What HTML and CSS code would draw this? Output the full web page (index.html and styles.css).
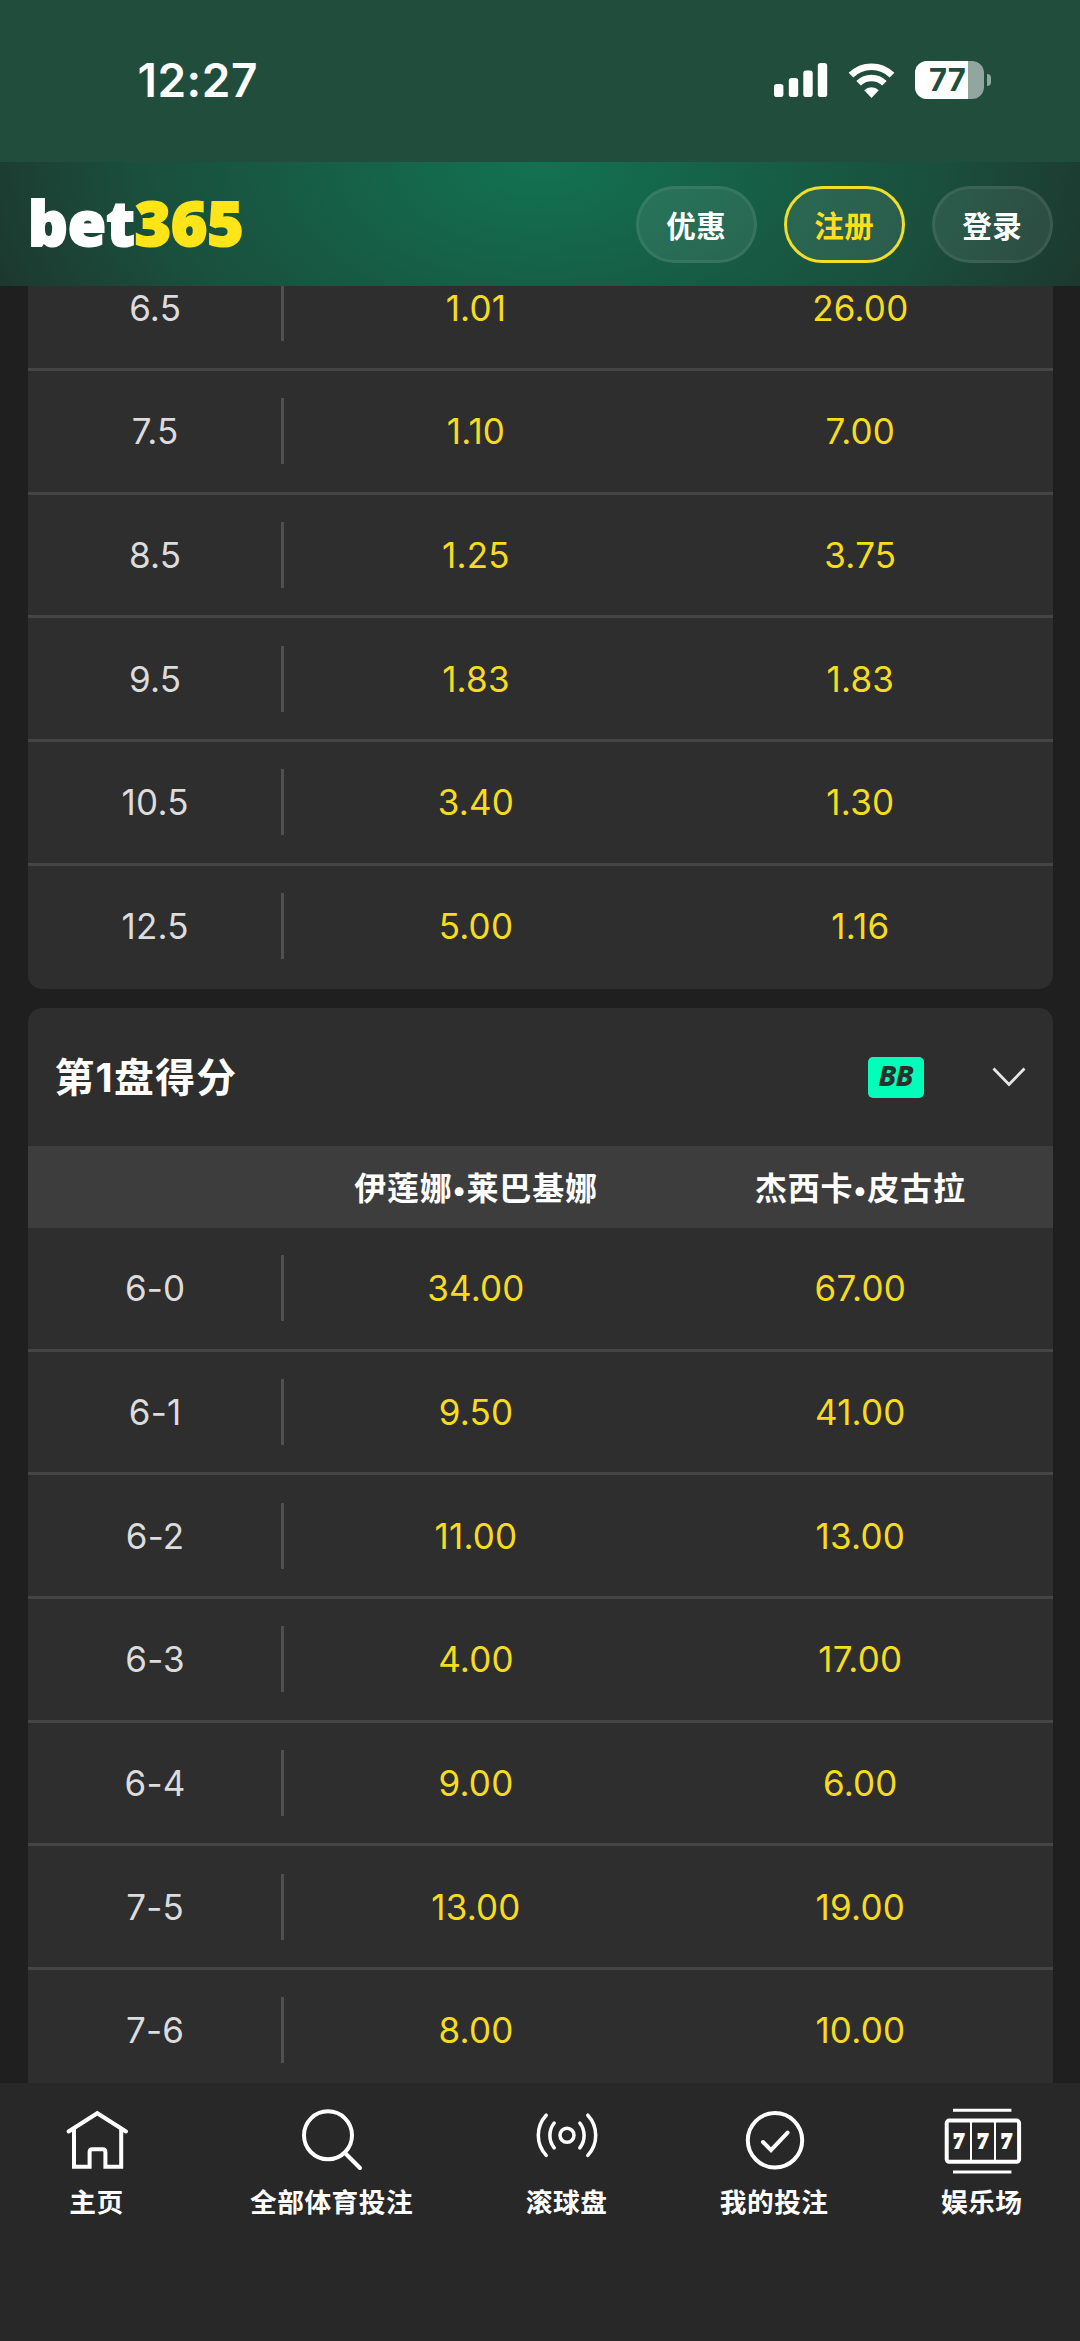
FILE: index.html
```html
<!DOCTYPE html>
<html lang="zh-CN">
<head>
<meta charset="utf-8">
<title>bet365</title>
<link rel="stylesheet" href="styles.css">
</head>
<body>
<div class="screen">
  <div class="status">
    <span class="clock">12:27</span>
    <div class="status-icons">
      <svg class="signal" width="54" height="34" viewBox="0 0 54 34" fill="#fff">
        <rect x="0" y="21" width="9.4" height="13" rx="2.8"/>
        <rect x="14.8" y="15" width="9.4" height="19" rx="2.8"/>
        <rect x="29.3" y="7.5" width="9.4" height="26.5" rx="2.8"/>
        <rect x="43.8" y="0" width="9.4" height="34" rx="2.8"/>
      </svg>
      <svg class="wifi" width="47" height="35" viewBox="0 0 47 35">
        <path d="M3 12.2A29 29 0 0 1 44 12.2" fill="none" stroke="#fff" stroke-width="6.6"/>
        <path d="M10.6 20.2A18.5 18.5 0 0 1 36.4 20.2" fill="none" stroke="#fff" stroke-width="6.4"/>
        <path d="M23.5 35L16.2 27.2A10.3 10.3 0 0 1 30.8 27.2Z" fill="#fff"/>
      </svg>
      <div class="battery"><span class="battery-level">77</span></div>
      <span class="battery-tip"></span>
    </div>
  </div>

  <header class="topbar">
    <div class="logo">bet<span class="logo-num">365</span></div>
    <div class="actions">
      <a class="pill">优惠</a>
      <a class="pill pill-join">注册</a>
      <a class="pill">登录</a>
    </div>
  </header>

  <main class="content">
    <section class="card card-top">
      <div class="row"><span class="line">6.5</span><span class="odds">1.01</span><span class="odds">26.00</span></div>
      <div class="row"><span class="line">7.5</span><span class="odds">1.10</span><span class="odds">7.00</span></div>
      <div class="row"><span class="line">8.5</span><span class="odds">1.25</span><span class="odds">3.75</span></div>
      <div class="row"><span class="line">9.5</span><span class="odds">1.83</span><span class="odds">1.83</span></div>
      <div class="row"><span class="line">10.5</span><span class="odds">3.40</span><span class="odds">1.30</span></div>
      <div class="row"><span class="line">12.5</span><span class="odds">5.00</span><span class="odds">1.16</span></div>
    </section>

    <section class="card card-bottom">
      <div class="card-head">
        <h2 class="card-title">第1盘得分</h2>
        <span class="badge">BB</span>
        <svg class="chevron" width="34" height="20" viewBox="0 0 34 20"><path d="M1.5 1.5L17 17.5L32.5 1.5" fill="none" stroke="#e6e6e6" stroke-width="2.8"/></svg>
      </div>
      <div class="players">
        <span class="player">伊莲娜<i class="dot">•</i>莱巴基娜</span>
        <span class="player">杰西卡<i class="dot">•</i>皮古拉</span>
      </div>
      <div class="row"><span class="line">6-0</span><span class="odds">34.00</span><span class="odds">67.00</span></div>
      <div class="row"><span class="line">6-1</span><span class="odds">9.50</span><span class="odds">41.00</span></div>
      <div class="row"><span class="line">6-2</span><span class="odds">11.00</span><span class="odds">13.00</span></div>
      <div class="row"><span class="line">6-3</span><span class="odds">4.00</span><span class="odds">17.00</span></div>
      <div class="row"><span class="line">6-4</span><span class="odds">9.00</span><span class="odds">6.00</span></div>
      <div class="row"><span class="line">7-5</span><span class="odds">13.00</span><span class="odds">19.00</span></div>
      <div class="row"><span class="line">7-6</span><span class="odds">8.00</span><span class="odds">10.00</span></div>
    </section>
  </main>

  <nav class="tabs">
    <a class="tab">
      <svg class="tab-icon" width="82" height="70" viewBox="0 0 82 70">
        <path d="M12.6 28.5L41.3 10.2L70 28.5" stroke-linecap="round"/>
        <path d="M18 25V63.7H33.6V49Q33.6 46.3 36.3 46.3H46.7Q49.4 46.3 49.4 49V63.7H65.2V25"/>
      </svg>
      <span class="tab-label">主页</span>
    </a>
    <a class="tab tab-wide">
      <svg class="tab-icon" width="82" height="70" viewBox="0 0 82 70">
        <circle cx="37" cy="32.3" r="24"/>
        <path d="M54 50L69 65" stroke-linecap="round"/>
      </svg>
      <span class="tab-label">全部体育投注</span>
    </a>
    <a class="tab">
      <svg class="tab-icon" width="82" height="70" viewBox="0 0 82 70">
        <g stroke-width="3.5" stroke-linecap="round">
          <circle cx="41" cy="32.3" r="7"/>
          <path d="M53.8 20A20 20 0 0 1 53.8 44.8M28.2 20A20 20 0 0 0 28.2 44.8"/>
          <path d="M61.8 12.2A29.5 29.5 0 0 1 61.8 52.4M20.2 12.2A29.5 29.5 0 0 0 20.2 52.4"/>
        </g>
      </svg>
      <span class="tab-label">滚球盘</span>
    </a>
    <a class="tab tab-mid">
      <svg class="tab-icon" width="82" height="70" viewBox="0 0 82 70">
        <circle cx="42" cy="37.3" r="27.2"/>
        <path d="M30 39L38 47.2L54.6 29.6" stroke-linecap="round"/>
      </svg>
      <span class="tab-label">我的投注</span>
    </a>
    <a class="tab">
      <svg class="tab-icon" width="82" height="70" viewBox="0 0 82 70">
        <path d="M12 7.3H70.4M12 69H70.4" stroke-width="3"/>
        <rect x="5.7" y="17.6" width="72.4" height="41.2" rx="2.5"/>
        <path d="M30 18V58M54 18V58" stroke-width="2"/>
        <g class="seven"><text x="17.8" y="45.4">7</text><text x="41.8" y="45.4">7</text><text x="65.6" y="45.4">7</text></g>
      </svg>
      <span class="tab-label">娱乐场</span>
    </a>
  </nav>
</div>
</body>
</html>
```

FILE: styles.css
```css
* { box-sizing: border-box; }

body {
  margin: 0;
  background: #1f1f1f;
  color: #fff;
  font-family: Inter, "Noto Sans CJK SC", sans-serif;
}

.screen {
  width: 1080px;
  height: 2341px;
  display: flex;
  flex-direction: column;
  overflow: hidden;
}

/* status bar */
.status {
  flex: none;
  height: 162px;
  padding: 0 89px 0 137.5px;
  display: flex;
  justify-content: space-between;
  align-items: flex-start;
  background: #214d3d;
}
.clock {
  margin-top: 53px;
  font-size: 46px;
  line-height: 55px;
  font-weight: 600;
  letter-spacing: 0.5px;
}
.status-icons {
  height: 38px;
  margin-top: 61px;
  display: flex;
  align-items: center;
}
.wifi { margin: 0 20px 0 20px; }
.battery {
  width: 69px;
  height: 38px;
  border-radius: 12px;
  overflow: hidden;
  background: #90a69e;
}
.battery-level {
  display: block;
  width: 53px;
  height: 38px;
  padding-left: 14px;
  background: #fff;
  color: #214d3d;
  font-size: 31px;
  line-height: 38px;
  font-weight: 700;
  letter-spacing: 0;
}
.battery-tip {
  width: 4px;
  height: 12px;
  margin-left: 3px;
  border-radius: 0 6px 6px 0;
  background: #90a69e;
}

/* brand bar */
.topbar {
  flex: none;
  height: 123.5px;
  padding: 2px 27.5px 0 28px;
  display: flex;
  align-items: center;
  justify-content: space-between;
  background: radial-gradient(ellipse 580px 340px at 50% 0, #127252 0%, #1a4e3d 70%, #1d382e 100%);
}
.logo {
  margin-top: -5px;
  font-family: "Noto Sans", sans-serif;
  font-size: 62px;
  line-height: 80px;
  font-weight: 900;
  letter-spacing: 0;
  -webkit-text-stroke: 2px currentColor;
}
.logo-num { color: #ffe418; }
.actions { display: flex; gap: 27.5px; }
.pill {
  width: 120.5px;
  height: 77px;
  padding-bottom: 2px;
  display: flex;
  align-items: center;
  justify-content: center;
  border: 3px solid rgba(255, 255, 255, 0.07);
  border-radius: 39px;
  background: rgba(255, 255, 255, 0.08);
  font-size: 29.5px;
  letter-spacing: 0.6px;
  font-weight: 700;
}
.pill-join { border-color: #f0de2a; color: #ffdf1b; }

/* markets */
.content {
  flex: 1;
  min-height: 0;
  overflow: hidden;
  padding: 0 27.5px;
}
.card {
  background: #2e2e2e;
  border-radius: 14px;
  overflow: hidden;
}
.card-top { margin-top: -38.2px; }
.card-bottom { margin-top: 19.2px; }
.row {
  height: 123.67px;
  display: grid;
  grid-template-columns: 25% 37.5% 37.5%;
  align-items: center;
  border-bottom: 3px solid #454545;
}
.card .row:last-child { border-bottom-color: transparent; }
.line, .odds {
  height: 66px;
  font-size: 35px;
  line-height: 67px;
  letter-spacing: 0.2px;
  text-align: center;
}
.line { padding-left: 2px; color: #dcdcdc; border-right: 3px solid #505050; }
.odds { color: #f7dc1e; }

.card-head {
  height: 137.4px;
  padding: 0 27px;
  display: flex;
  align-items: center;
}
.card-title {
  margin: 0;
  padding-bottom: 5px;
  flex: 1;
  font-size: 39.8px;
  letter-spacing: 1.3px;
  font-weight: 700;
}
.badge {
  width: 56px;
  height: 41px;
  margin-right: 68px;
  border-radius: 5px;
  background: #00ffb8;
  color: #25312d;
  font: italic 800 29px/36px "Noto Sans", sans-serif;
  letter-spacing: -1px;
  text-align: center;
}
.players {
  height: 82.3px;
  padding: 0 0 2px 25%;
  display: grid;
  grid-template-columns: 1fr 1fr;
  align-items: center;
  background: #3d3d3d;
}
.player {
  font-size: 32px;
  letter-spacing: 0.8px;
  font-weight: 700;
  text-align: center;
}
.dot {
  display: inline-block;
  width: 14px;
  font-size: 28px;
  font-style: normal;
  text-align: center;
}

/* bottom navigation */
.tabs {
  flex: none;
  height: 258.3px;
  padding: 20px 0 0 55.3px;
  display: flex;
  align-items: flex-start;
  gap: 111.3px;
  background: #282828;
}
.tab {
  width: 82.5px;
  flex: none;
  display: flex;
  flex-direction: column;
  align-items: center;
}
.tab-wide { width: 165px; }
.tab-mid { width: 110px; }
.tab-icon {
  overflow: visible;
  fill: none;
  stroke: #fff;
  stroke-width: 4;
}
.seven {
  fill: #fff;
  stroke: #fff;
  stroke-width: 1.8;
  font: 900 22px "Liberation Serif", serif;
  text-anchor: middle;
}
.tab-label {
  margin-top: 9px;
  font-size: 26.7px;
  line-height: 40px;
  letter-spacing: 0.5px;
  font-weight: 700;
  white-space: nowrap;
}
```
